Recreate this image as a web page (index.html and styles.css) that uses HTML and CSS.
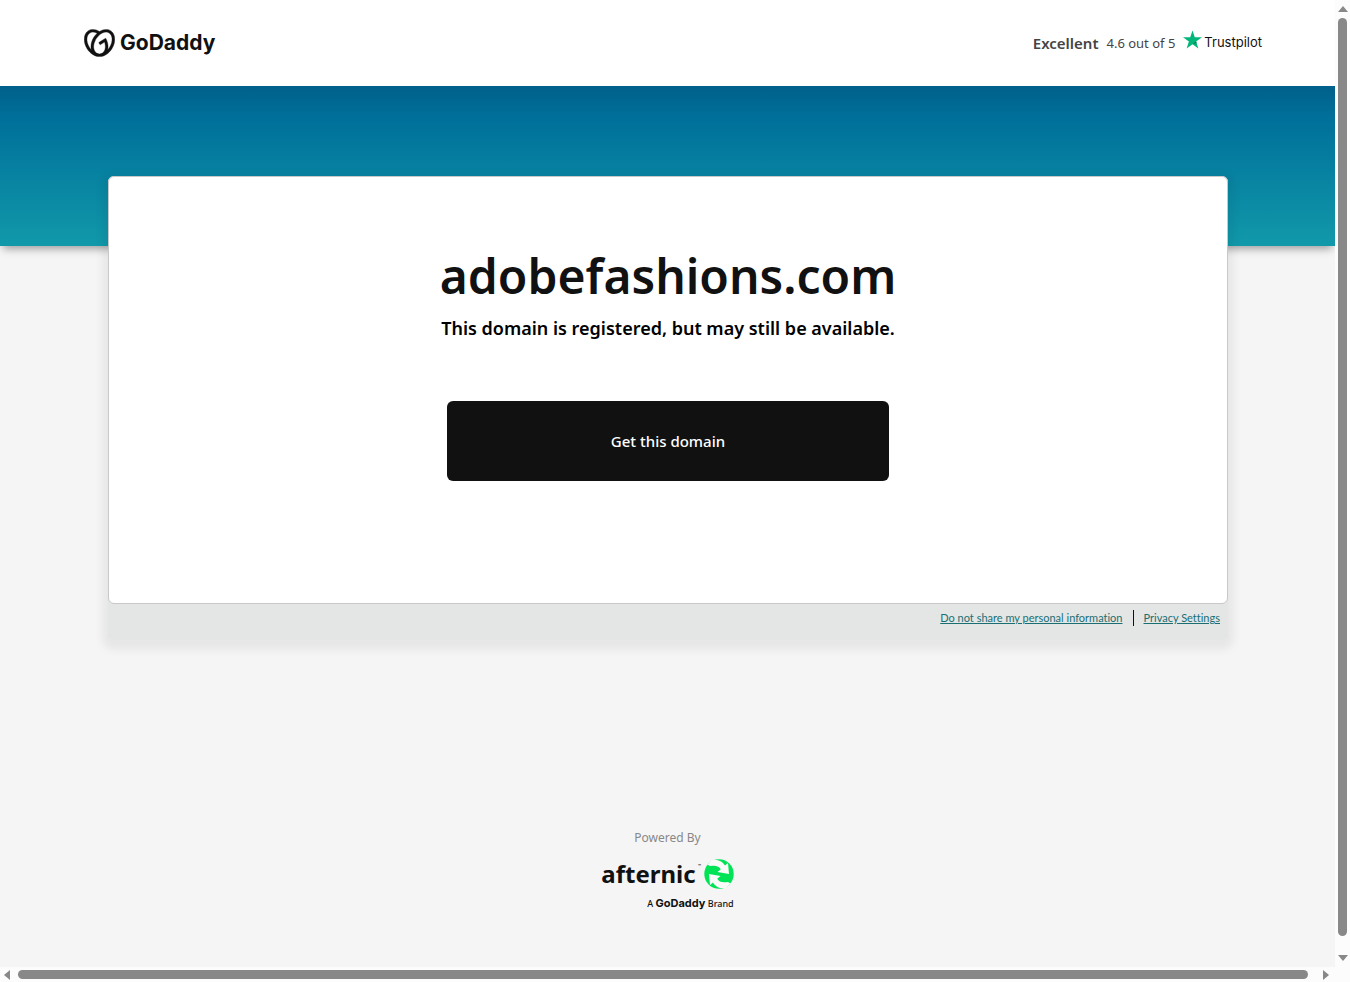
FILE: index.html
```html
<!DOCTYPE html>
<html lang="en">
<head>
<meta charset="utf-8">
<title>adobefashions.com</title>
<link rel="stylesheet" href="styles.css">
</head>
<body>
<div class="viewport">
  <div class="page">
    <header class="header">
      <a class="brand" href="#">
        <svg class="brand-mark" viewBox="0 1 24 22" aria-hidden="true"><path fill="currentColor" stroke="currentColor" stroke-width=".3" d="M20.702 2.29c-2.494-1.554-5.778-1.187-8.706.654C9.076 1.104 5.79.736 3.3 2.29c-3.941 2.463-4.42 8.806-1.07 14.167 2.47 3.954 6.333 6.269 9.77 6.226 3.439.043 7.301-2.273 9.771-6.226 3.347-5.361 2.872-11.704-1.069-14.167zM4.042 15.328a12.838 12.838 0 01-1.546-3.541 10.12 10.12 0 01-.336-3.338c.15-1.98.956-3.524 2.27-4.345 1.315-.822 3.052-.87 4.903-.137.281.113.556.24.825.382A15.11 15.11 0 007.5 7.54c-2.035 3.255-2.655 6.878-1.945 9.765a13.247 13.247 0 01-1.514-1.98zm17.465-3.541a12.866 12.866 0 01-1.547 3.54 13.25 13.25 0 01-1.513 1.984c.635-2.589.203-5.76-1.353-8.734a.39.39 0 00-.563-.153l-4.852 3.032a.397.397 0 00-.126.546l.712 1.139a.395.395 0 00.547.126l3.145-1.965c.101.306.203.606.28.916.296 1.086.41 2.214.335 3.337-.15 1.982-.956 3.525-2.27 4.347a4.437 4.437 0 01-2.25.65h-.101a4.432 4.432 0 01-2.25-.65c-1.314-.822-2.121-2.365-2.27-4.347-.074-1.123.039-2.251.335-3.337a13.212 13.212 0 014.05-6.482 10.148 10.148 0 012.849-1.765c1.845-.733 3.586-.685 4.9.137 1.316.822 2.122 2.365 2.271 4.345a10.146 10.146 0 01-.333 3.334z"/></svg>
        <span class="brand-name">GoDaddy</span>
      </a>
      <a class="rating" href="#">
        <span class="rating-word">Excellent</span>
        <span class="rating-score">4.6 out of 5</span>
        <span class="trustpilot">
          <svg class="trustpilot-star" viewBox="0 0 20 19" aria-hidden="true"><path fill="#00b67a" d="M10 0l2.4 7.2H20l-6.200 4.400 2.400 7.400L10 14.400 3.800 19l2.400-7.400L0 7.200h7.600z"/><path fill="#007a4c" d="M14.400 13.200l-.6-1.600L10 14.400z"/></svg>
          <span class="trustpilot-name">Trustpilot</span>
        </span>
      </a>
    </header>
    <div class="band"></div>
    <main class="panel">
      <section class="card">
        <h1 class="domain">adobefashions.com</h1>
        <h2 class="status">This domain is registered, but may still be available.</h2>
        <button class="cta" type="button">Get this domain</button>
      </section>
      <nav class="privacy">
        <a class="privacy-link" href="#">Do not share my personal information</a>
        <a class="privacy-link" href="#">Privacy Settings</a>
      </nav>
    </main>
    <footer class="footer">
      <p class="powered">Powered By</p>
      <div class="afternic">
        <div class="afternic-row">
          <span class="afternic-name">afternic</span>
          <span class="trademark">™</span>
          <svg class="afternic-mark" viewBox="0 0 30 30" aria-hidden="true"><circle cx="15" cy="15" r="14.700" fill="#00e356"/><g fill="#fafafa"><path id="arrow" d="M8 1.200C13 .2 18 1.500 21 6.600L24 4 25 15 13.500 13 16.800 10.200C15 7 11.500 6 6 7L3.500 5.500z"/><use href="#arrow" transform="rotate(180 15 15)"/></g></svg>
        </div>
        <p class="tagline">A <strong class="tagline-brand">GoDaddy</strong> Brand</p>
      </div>
    </footer>
  </div>
  <div class="bar bar-y" aria-hidden="true">
    <svg class="arrow-y" viewBox="0 0 10 6"><path d="M0 6l5-6 5 6z"/></svg>
    <div class="thumb"></div>
    <svg class="arrow-y arrow-down" viewBox="0 0 10 6"><path d="M0 0l5 6 5-6z"/></svg>
  </div>
  <div class="bar bar-x" aria-hidden="true">
    <svg class="arrow-x" viewBox="0 0 6 10"><path d="M6 0L0 5l6 5z"/></svg>
    <div class="thumb"></div>
    <svg class="arrow-x arrow-right" viewBox="0 0 6 10"><path d="M0 0l6 5-6 5z"/></svg>
  </div>
</div>
</body>
</html>
```
FILE: styles.css
```css
* { box-sizing: border-box; }
body {
  margin: 0;
  font-family: "Noto Sans", sans-serif;
  color: #111;
  background: #fcfcfc;
}
h1, h2, p { margin: 0; }
a { color: inherit; text-decoration: none; }
.viewport {
  display: grid;
  grid-template-columns: minmax(0, 1fr) 15px;
  grid-template-rows: minmax(0, 1fr) 15px;
  height: 100vh;
}
.page {
  display: flex;
  flex-direction: column;
  overflow: hidden;
  background: #f5f5f5;
}
.header {
  display: flex;
  flex: none;
  align-items: center;
  justify-content: space-between;
  height: 86px;
  padding: 0 73px 0 84px;
  background: #fff;
}
.brand { display: flex; align-items: center; gap: 5px; }
.brand-mark { width: 31px; height: 28px; }
.brand-name { font: 700 21px/28px Inter, sans-serif; }
.rating { display: flex; align-items: center; gap: 8px; color: #444; font-size: 13px; }
.rating-word { font-size: 15px; font-weight: 600; }
.trustpilot {
  display: flex;
  align-items: flex-end;
  gap: 2px;
  padding-bottom: 7px;
  color: #111;
  font: 13px/16px Inter, sans-serif;
}
.trustpilot-star { width: 19px; height: 19px; margin-bottom: 1px; }
.band {
  flex: none;
  height: 160px;
  background: linear-gradient(#00608b, #00709a 20%, #1199aa);
  box-shadow: 0 6px 8px -3px rgba(0, 0, 0, .35);
}
.panel {
  flex: none;
  margin: -70px 107px 0 108px;
  border-radius: 6px;
  background: #e4e5e5;
  box-shadow: 0 4px 8px 6px rgba(0, 0, 0, .06);
}
.card {
  display: flex;
  flex-direction: column;
  align-items: center;
  padding: 64px 24px 122px;
  border: 1px solid #c8c8c8;
  border-radius: 6px;
  background: #fff;
}
.domain { font-size: 48px; font-weight: 600; line-height: 70px; }
.status { font-size: 18px; font-weight: 600; line-height: 34px; color: #000; }
.cta {
  width: 442px;
  max-width: 100%;
  height: 80px;
  margin-top: 56px;
  border: 0;
  border-radius: 6px;
  background: #111;
  color: #fff;
  font: 500 15px/24px "Noto Sans", sans-serif;
}
.privacy {
  display: flex;
  justify-content: flex-end;
  padding: 6px 8px 14px;
  font: 11px/16px Lato, sans-serif;
  font-variant-ligatures: none;
}
.privacy-link { color: #1a6f73; text-decoration: underline; }
.privacy-link + .privacy-link { margin-left: 10px; padding-left: 10px; border-left: 1px solid #111; }
.footer {
  display: flex;
  flex-direction: column;
  align-items: center;
  margin-top: 189px;
}
.powered { color: #888; font-size: 12px; line-height: 18px; }
.afternic { margin-top: 11px; }
.afternic-row { display: flex; align-items: center; }
.afternic-name { font-size: 24px; font-weight: 700; line-height: 32px; }
.trademark { align-self: flex-start; width: 8px; padding-top: 6px; font-size: 4px; line-height: 4px; text-align: center; }
.afternic-mark { width: 30px; height: 30px; }
.tagline { margin-top: 6px; font-size: 9px; font-weight: 500; line-height: 14px; text-align: right; }
.tagline-brand { font: 700 11px/14px Inter, sans-serif; }
.bar { display: flex; align-items: center; background: #fcfcfc; fill: #888; }
.bar-y { flex-direction: column; padding: 6px 0; }
.bar-x { padding: 0 6px 0 4px; }
.thumb { flex: 1; border-radius: 5px; background: #888; }
.bar-y .thumb { width: 9px; margin: 6px 0 19px; }
.bar-x .thumb { height: 9px; margin: 0 15px 0 8px; }
.arrow-y { width: 10px; height: 6px; }
.arrow-x { width: 6px; height: 10px; }
```
